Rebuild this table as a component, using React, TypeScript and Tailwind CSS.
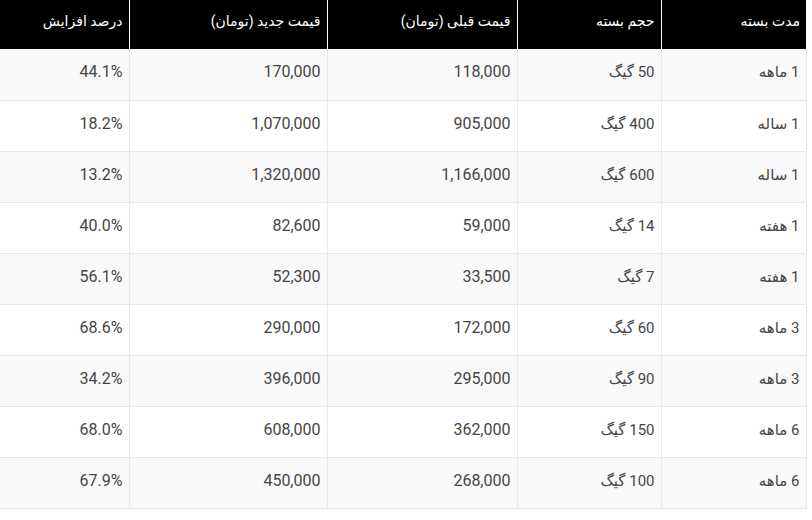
import React from 'react';

type Row = {
  modat: string;
  hajm: string;
  ghabli: string;
  jadid: string;
  darsad: string;
};

const ROWS: Row[] = [
  { modat: '1 ماهه', hajm: '50 گیگ', ghabli: '118,000', jadid: '170,000', darsad: '44.1%' },
  { modat: '1 ساله', hajm: '400 گیگ', ghabli: '905,000', jadid: '1,070,000', darsad: '18.2%' },
  { modat: '1 ساله', hajm: '600 گیگ', ghabli: '1,166,000', jadid: '1,320,000', darsad: '13.2%' },
  { modat: '1 هفته', hajm: '14 گیگ', ghabli: '59,000', jadid: '82,600', darsad: '40.0%' },
  { modat: '1 هفته', hajm: '7 گیگ', ghabli: '33,500', jadid: '52,300', darsad: '56.1%' },
  { modat: '3 ماهه', hajm: '60 گیگ', ghabli: '172,000', jadid: '290,000', darsad: '68.6%' },
  { modat: '3 ماهه', hajm: '90 گیگ', ghabli: '295,000', jadid: '396,000', darsad: '34.2%' },
  { modat: '6 ماهه', hajm: '150 گیگ', ghabli: '362,000', jadid: '608,000', darsad: '68.0%' },
  { modat: '6 ماهه', hajm: '100 گیگ', ghabli: '268,000', jadid: '450,000', darsad: '67.9%' },
];

const HEAD = ['مدت بسته', 'حجم بسته', 'قیمت قبلی (تومان)', 'قیمت جدید (تومان)', 'درصد افزایش'];
const WIDTHS = ['w-[145px]', 'w-[144px]', 'w-[190px]', 'w-[198px]', 'w-[129px]'];

export default function App() {
  return (
    <div className="min-h-screen bg-white" style={{ fontFamily: 'Roboto, "DejaVu Sans", sans-serif' }}>
      <table dir="rtl" className="w-[806px] border-collapse table-fixed text-right">
        <thead>
          <tr className="h-[49px] bg-black text-white text-[14px]">
            {HEAD.map((h, i) => (
              <th
                key={h}
                className={
                  WIDTHS[i] +
                  ' align-top pt-[11px] pr-[6px] font-normal ' +
                  (i < HEAD.length - 1 ? 'border-l border-white' : '')
                }
              >
                {h}
              </th>
            ))}
          </tr>
        </thead>
        <tbody className="text-[16px] text-[#454545]">
          {ROWS.map((r, idx) => (
            <tr key={idx} className={'h-[51px] ' + (idx % 2 === 0 ? 'bg-[#f9f9f9]' : 'bg-white')}>
              {[r.modat, r.hajm, r.ghabli, r.jadid, r.darsad].map((v, i) => (
                <td
                  key={i}
                  className={
                    'pr-[6px] pb-[4px] border-b border-[#e8e8e8] ' +
                    (i === 0 ? 'border-r ' : '') +
                    (i < 4 ? 'border-l border-[#e8e8e8]' : '')
                  }
                >
                  {i < 2 ? <span className="text-[15px]">{v}</span> : v}
                </td>
              ))}
            </tr>
          ))}
        </tbody>
      </table>
    </div>
  );
}
